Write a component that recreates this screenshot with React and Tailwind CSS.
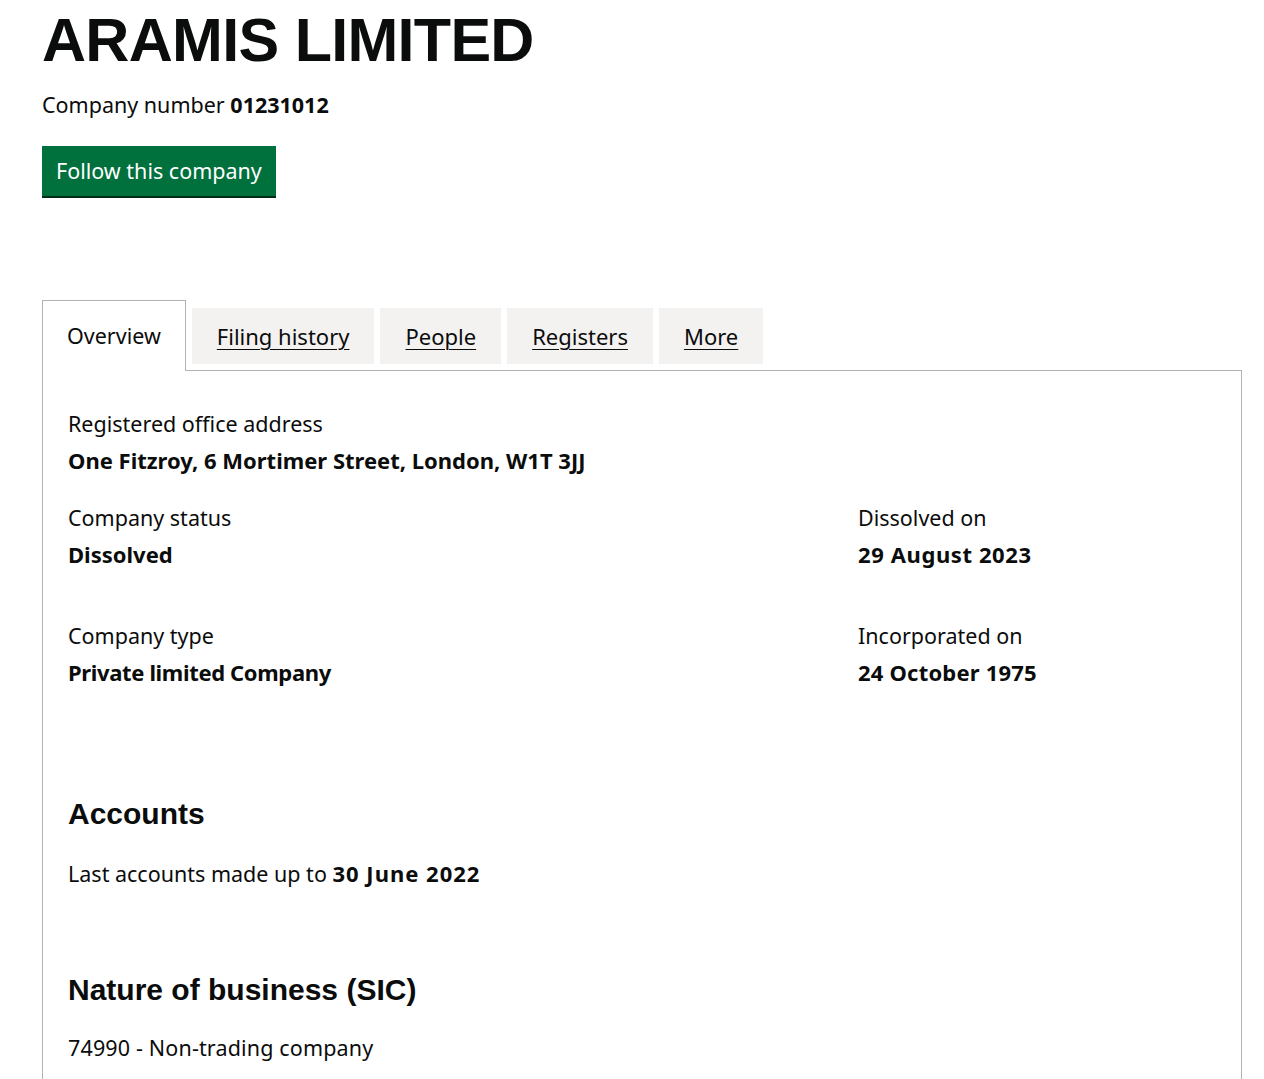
import React from "react";

const body = "font-['Noto_Sans',sans-serif]";
const head = "font-['Liberation_Sans',Arial,sans-serif] font-bold";

function Tab({ children }) {
  return (
    <a
      href="#"
      className="ml-[6px] mt-[8px] h-[56px] bg-[#f3f2f1] px-[25px] pt-[13px] text-[22px] leading-[30px] text-[#0b0c0c] underline decoration-1 underline-offset-[4px]"
    >
      {children}
    </a>
  );
}

function Field({ label, value, gap, valueClass = "" }) {
  return (
    <div>
      <div className="text-[21.5px] leading-[30px]">{label}</div>
      <div className={`${gap} text-[22px] font-bold leading-[30px] ${valueClass}`}>{value}</div>
    </div>
  );
}

export default function App() {
  return (
    <div className={`min-h-screen bg-white pl-[42px] pr-[22px] text-[#0b0c0c] ${body}`}>
      <h1 className={`${head} pt-[8px] text-[61px] leading-[64px] tracking-[-0.7px]`}>
        ARAMIS LIMITED
      </h1>
      <p className="mt-[18px] text-[21.5px] leading-[30px]">
        Company number <strong className="font-bold">01231012</strong>
      </p>
      <button className="mt-[26px] flex h-[50px] items-center bg-[#00703c] px-[14px] text-[21.5px] leading-[30px] text-white shadow-[0_2px_0_#002d18]">
        Follow this company
      </button>

      <div className="mt-[104px] flex items-start">
        <div className="relative z-10 h-[71px] border border-b-0 border-[#b1b4b6] bg-white px-[24px] pt-[20px] text-[21.5px] leading-[30px]">
          Overview
        </div>
        <Tab>Filing history</Tab>
        <Tab>People</Tab>
        <Tab>Registers</Tab>
        <Tab>More</Tab>
      </div>

      <div className="-mt-px border border-[#b1b4b6] px-[25px] pb-[40px] pt-[38px]">
        <div className="text-[21.5px] leading-[30px]">Registered office address</div>
        <div className="mt-[6px] text-[22px] font-bold leading-[30px]">
          One Fitzroy, 6 Mortimer Street, London, W1T 3JJ
        </div>

        <div className="mt-[28px] grid grid-cols-[790px_1fr]">
          <Field label="Company status" value="Dissolved" gap="mt-[6px]" />
          <Field label="Dissolved on" value="29 August 2023" gap="mt-[6px]" valueClass="tracking-[0.6px]" />
        </div>

        <div className="mt-[52px] grid grid-cols-[790px_1fr]">
          <Field label="Company type" value="Private limited Company" gap="mt-[6px]" valueClass="tracking-[-0.35px]" />
          <Field label="Incorporated on" value="24 October 1975" gap="mt-[6px]" valueClass="tracking-[0.2px]" />
        </div>

        <h2 className={`${head} mt-[109px] text-[30px] leading-[36px]`}>Accounts</h2>
        <p className="mt-[26px] text-[21.5px] leading-[30px]">
          Last accounts made up to{" "}
          <strong className="text-[22px] font-bold tracking-[1px]">30 June 2022</strong>
        </p>

        <h2 className={`${head} mt-[83px] text-[30px] leading-[36px]`}>Nature of business (SIC)</h2>
        <p className="mt-[25px] text-[21.5px] leading-[30px] tracking-[0.15px]">74990 - Non-trading company</p>
      </div>
    </div>
  );
}
